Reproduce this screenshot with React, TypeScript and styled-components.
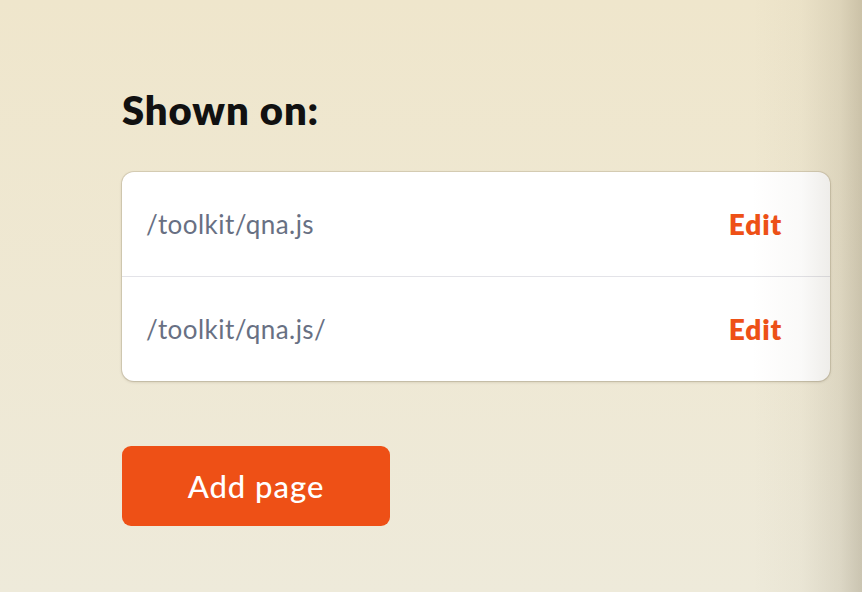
import React from 'react';
import styled, { createGlobalStyle } from 'styled-components';

const GlobalStyle = createGlobalStyle`
  html, body {
    margin: 0;
    padding: 0;
    height: 100%;
  }
  body {
    font-family: Lato, "Open Sans", sans-serif;
    background: linear-gradient(180deg, #efe6cc 0%, #eeeada 100%);
    overflow: hidden;
  }
  #root {
    height: 100%;
  }
`;

const Page = styled.div`
  position: relative;
  width: 862px;
  height: 592px;
  padding: 87px 32px 0 122px;
  box-sizing: border-box;

  &::after {
    content: '';
    position: absolute;
    top: 0;
    right: 0;
    bottom: 0;
    width: 110px;
    pointer-events: none;
    background: linear-gradient(
      90deg,
      rgba(120, 108, 80, 0) 0%,
      rgba(120, 108, 80, 0.04) 45%,
      rgba(110, 98, 70, 0.14) 80%,
      rgba(100, 88, 60, 0.26) 100%
    );
  }
`;

const Heading = styled.h2`
  margin: 0 0 39px;
  font-size: 40px;
  font-weight: 800;
  letter-spacing: 0.9px;
  color: #111;
  line-height: 46px;
`;

const Card = styled.div`
  width: 708px;
  background: #fff;
  border-radius: 12px;
  box-shadow: 0 0 0 1px rgba(150, 140, 110, 0.25), 0 1px 3px rgba(90, 80, 50, 0.25);
  overflow: hidden;
`;

const Row = styled.div`
  display: flex;
  align-items: center;
  justify-content: space-between;
  height: 104px;
  padding: 0 48px 0 24px;
  & + & {
    border-top: 1.5px solid #e3e3e8;
  }
`;

const Path = styled.span`
  font-size: 26px;
  letter-spacing: 0.45px;
  color: #687083;
`;

const EditLink = styled.a`
  font-size: 28px;
  font-weight: 800;
  letter-spacing: 0.8px;
  color: #ee5016;
  cursor: pointer;
`;

const AddButton = styled.button`
  margin-top: 65px;
  width: 268px;
  height: 80px;
  border: none;
  border-radius: 9px;
  background: #ee5016;
  color: #fff;
  font-family: inherit;
  font-size: 31px;
  font-weight: 500;
  letter-spacing: 1px;
  cursor: pointer;
`;

const pages = ['/toolkit/qna.js', '/toolkit/qna.js/'];

const App: React.FC = () => {
  return (
    <>
      <GlobalStyle />
      <Page>
        <Heading>Shown on:</Heading>
        <Card>
          {pages.map((p) => (
            <Row key={p}>
              <Path>{p}</Path>
              <EditLink>Edit</EditLink>
            </Row>
          ))}
        </Card>
        <AddButton>Add page</AddButton>
      </Page>
    </>
  );
};

export default App;
